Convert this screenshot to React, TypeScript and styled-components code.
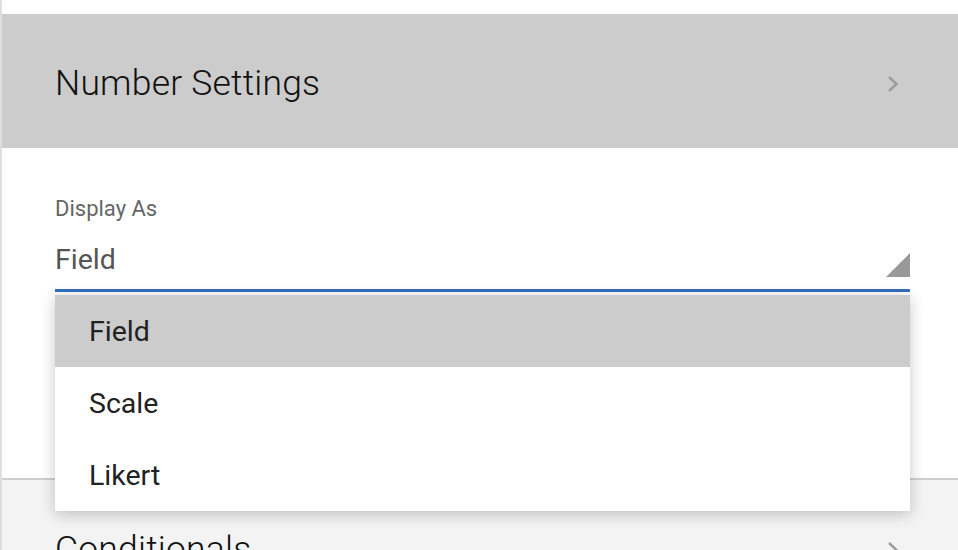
import styled, { createGlobalStyle } from "styled-components";

const GlobalStyle = createGlobalStyle`
  html, body {
    margin: 0;
    padding: 0;
    background: #ffffff;
    font-family: Roboto, "Liberation Sans", sans-serif;
    overflow: hidden;
  }
`;

const Panel = styled.div`
  width: 958px;
  height: 550px;
  padding-top: 14px;
  box-sizing: border-box;
  border-left: 2px solid #dedede;
  overflow: hidden;
`;

const SectionHeader = styled.div<{ $active?: boolean }>`
  display: flex;
  align-items: center;
  justify-content: space-between;
  height: ${(p) => (p.$active ? "134px" : "auto")};
  padding: ${(p) => (p.$active ? "3px 59px 0 53px" : "48px 59px 0 53px")};
  background: ${(p) => (p.$active ? "#cccccc" : "#f3f3f3")};
  border-top: ${(p) => (p.$active ? "none" : "2px solid #cfcfcf")};
  box-sizing: border-box;
`;

const SectionTitle = styled.div`
  font-size: 35.5px;
  font-weight: 300;
  color: #111111;
  letter-spacing: 0.2px;
`;

const Chevron = styled.svg`
  width: 12px;
  height: 18px;
  margin-top: 2px;
  flex-shrink: 0;
`;

const SectionBody = styled.div`
  height: 330px;
  padding: 48px 48px 0 53px;
  box-sizing: border-box;
`;

const Label = styled.div`
  font-size: 22px;
  color: #666666;
  line-height: 26px;
`;

const SelectWrap = styled.div`
  position: relative;
  margin-top: 21px;
`;

const SelectField = styled.div`
  position: relative;
  height: 46px;
  font-size: 28.5px;
  line-height: 34px;
  color: #555555;
  border-bottom: 3px solid #3170c1;
`;

const Triangle = styled.div`
  position: absolute;
  right: 0;
  top: 10px;
  width: 0;
  height: 0;
  border-style: solid;
  border-width: 0 0 24px 24px;
  border-color: transparent transparent #999999 transparent;
`;

const Menu = styled.ul`
  position: absolute;
  left: 0;
  right: 0;
  top: 52px;
  margin: 0;
  padding: 0;
  list-style: none;
  background: #ffffff;
  box-shadow: 0 3px 14px rgba(0, 0, 0, 0.22);
  z-index: 2;
`;

const MenuItem = styled.li<{ $selected?: boolean }>`
  display: flex;
  align-items: center;
  height: 72px;
  padding-left: 34px;
  font-size: 28.5px;
  color: #222222;
  background: ${(p) => (p.$selected ? "#cccccc" : "#ffffff")};
`;

const ChevronIcon = () => (
  <Chevron viewBox="0 0 12 18">
    <polyline points="2,2 9.5,9 2,16" fill="none" stroke="#9a9a9a" strokeWidth="2.4" />
  </Chevron>
);

const options = ["Field", "Scale", "Likert"];

export default function App() {
  return (
    <>
      <GlobalStyle />
      <Panel>
        <SectionHeader $active>
          <SectionTitle>Number Settings</SectionTitle>
          <ChevronIcon />
        </SectionHeader>
        <SectionBody>
          <Label>Display As</Label>
          <SelectWrap>
            <SelectField>
              Field
              <Triangle />
            </SelectField>
            <Menu>
              {options.map((o) => (
                <MenuItem key={o} $selected={o === "Field"}>
                  {o}
                </MenuItem>
              ))}
            </Menu>
          </SelectWrap>
        </SectionBody>
        <SectionHeader>
          <SectionTitle>Conditionals</SectionTitle>
          <ChevronIcon />
        </SectionHeader>
      </Panel>
    </>
  );
}
